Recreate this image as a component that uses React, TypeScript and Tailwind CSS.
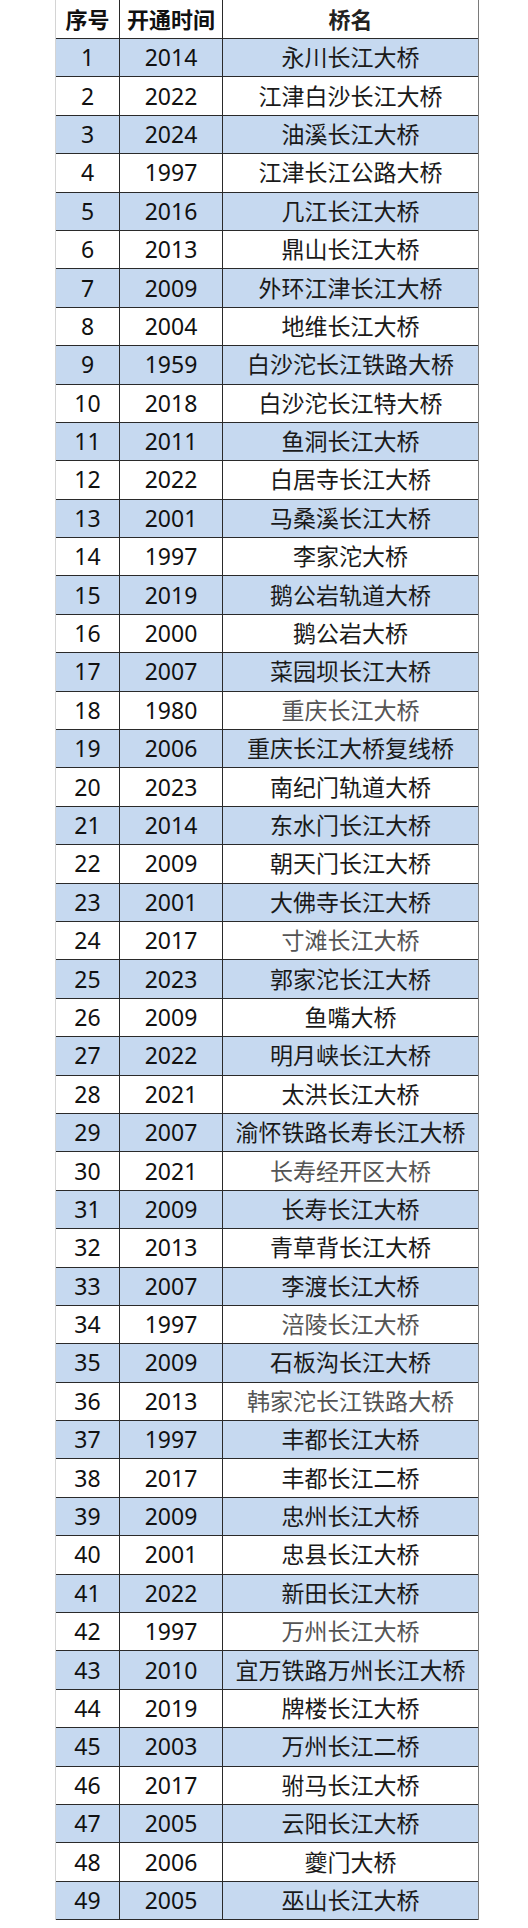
import React from "react";

const rows: [number, string, string, boolean?][] = [
  [1, "2014", "永川长江大桥"],
  [2, "2022", "江津白沙长江大桥"],
  [3, "2024", "油溪长江大桥"],
  [4, "1997", "江津长江公路大桥"],
  [5, "2016", "几江长江大桥"],
  [6, "2013", "鼎山长江大桥"],
  [7, "2009", "外环江津长江大桥"],
  [8, "2004", "地维长江大桥"],
  [9, "1959", "白沙沱长江铁路大桥"],
  [10, "2018", "白沙沱长江特大桥"],
  [11, "2011", "鱼洞长江大桥"],
  [12, "2022", "白居寺长江大桥"],
  [13, "2001", "马桑溪长江大桥"],
  [14, "1997", "李家沱大桥"],
  [15, "2019", "鹅公岩轨道大桥"],
  [16, "2000", "鹅公岩大桥"],
  [17, "2007", "菜园坝长江大桥"],
  [18, "1980", "重庆长江大桥", true],
  [19, "2006", "重庆长江大桥复线桥"],
  [20, "2023", "南纪门轨道大桥"],
  [21, "2014", "东水门长江大桥"],
  [22, "2009", "朝天门长江大桥"],
  [23, "2001", "大佛寺长江大桥"],
  [24, "2017", "寸滩长江大桥", true],
  [25, "2023", "郭家沱长江大桥"],
  [26, "2009", "鱼嘴大桥"],
  [27, "2022", "明月峡长江大桥"],
  [28, "2021", "太洪长江大桥"],
  [29, "2007", "渝怀铁路长寿长江大桥"],
  [30, "2021", "长寿经开区大桥", true],
  [31, "2009", "长寿长江大桥"],
  [32, "2013", "青草背长江大桥"],
  [33, "2007", "李渡长江大桥"],
  [34, "1997", "涪陵长江大桥", true],
  [35, "2009", "石板沟长江大桥"],
  [36, "2013", "韩家沱长江铁路大桥", true],
  [37, "1997", "丰都长江大桥"],
  [38, "2017", "丰都长江二桥"],
  [39, "2009", "忠州长江大桥"],
  [40, "2001", "忠县长江大桥"],
  [41, "2022", "新田长江大桥"],
  [42, "1997", "万州长江大桥", true],
  [43, "2010", "宜万铁路万州长江大桥"],
  [44, "2019", "牌楼长江大桥"],
  [45, "2003", "万州长江二桥"],
  [46, "2017", "驸马长江大桥"],
  [47, "2005", "云阳长江大桥"],
  [48, "2006", "夔门大桥"],
  [49, "2005", "巫山长江大桥"],
];

export default function App() {
  return (
    <div
      className="w-[528px] h-[1928px] bg-white"
      style={{ fontFamily: '"Noto Sans", "Noto Sans CJK SC", sans-serif' }}
    >
      <div className="ml-[55px] w-[424px] border-l border-l-[#d4d4d4] border-r border-r-[#7a7a7a] text-[23px] text-[#111]">
        <div className="grid grid-cols-[64px_103px_1fr] h-[39px] border-b border-[#2a2a2a] font-bold bg-white text-[22px]">
          <div className="flex items-center justify-center border-r border-[#2a2a2a] leading-none">序号</div>
          <div className="flex items-center justify-center border-r border-[#2a2a2a] leading-none">开通时间</div>
          <div className="flex items-center justify-center leading-none text-[#222]">桥名</div>
        </div>
        {rows.map(([n, y, name, gray]) => (
          <div
            key={n}
            className={
              "grid grid-cols-[64px_103px_1fr] h-[38.4px] border-b border-[#2a2a2a] " +
              (n % 2 === 1 ? "bg-[#c6d9f0]" : "bg-white")
            }
          >
            <div className="flex items-center justify-center border-r border-[#2a2a2a] leading-none">{n}</div>
            <div className="flex items-center justify-center border-r border-[#2a2a2a] leading-none">{y}</div>
            <div className={"flex items-center justify-center leading-none " + (gray ? "text-[#555]" : "text-[#1a1a1a]")}>
              {name}
            </div>
          </div>
        ))}
      </div>
    </div>
  );
}
